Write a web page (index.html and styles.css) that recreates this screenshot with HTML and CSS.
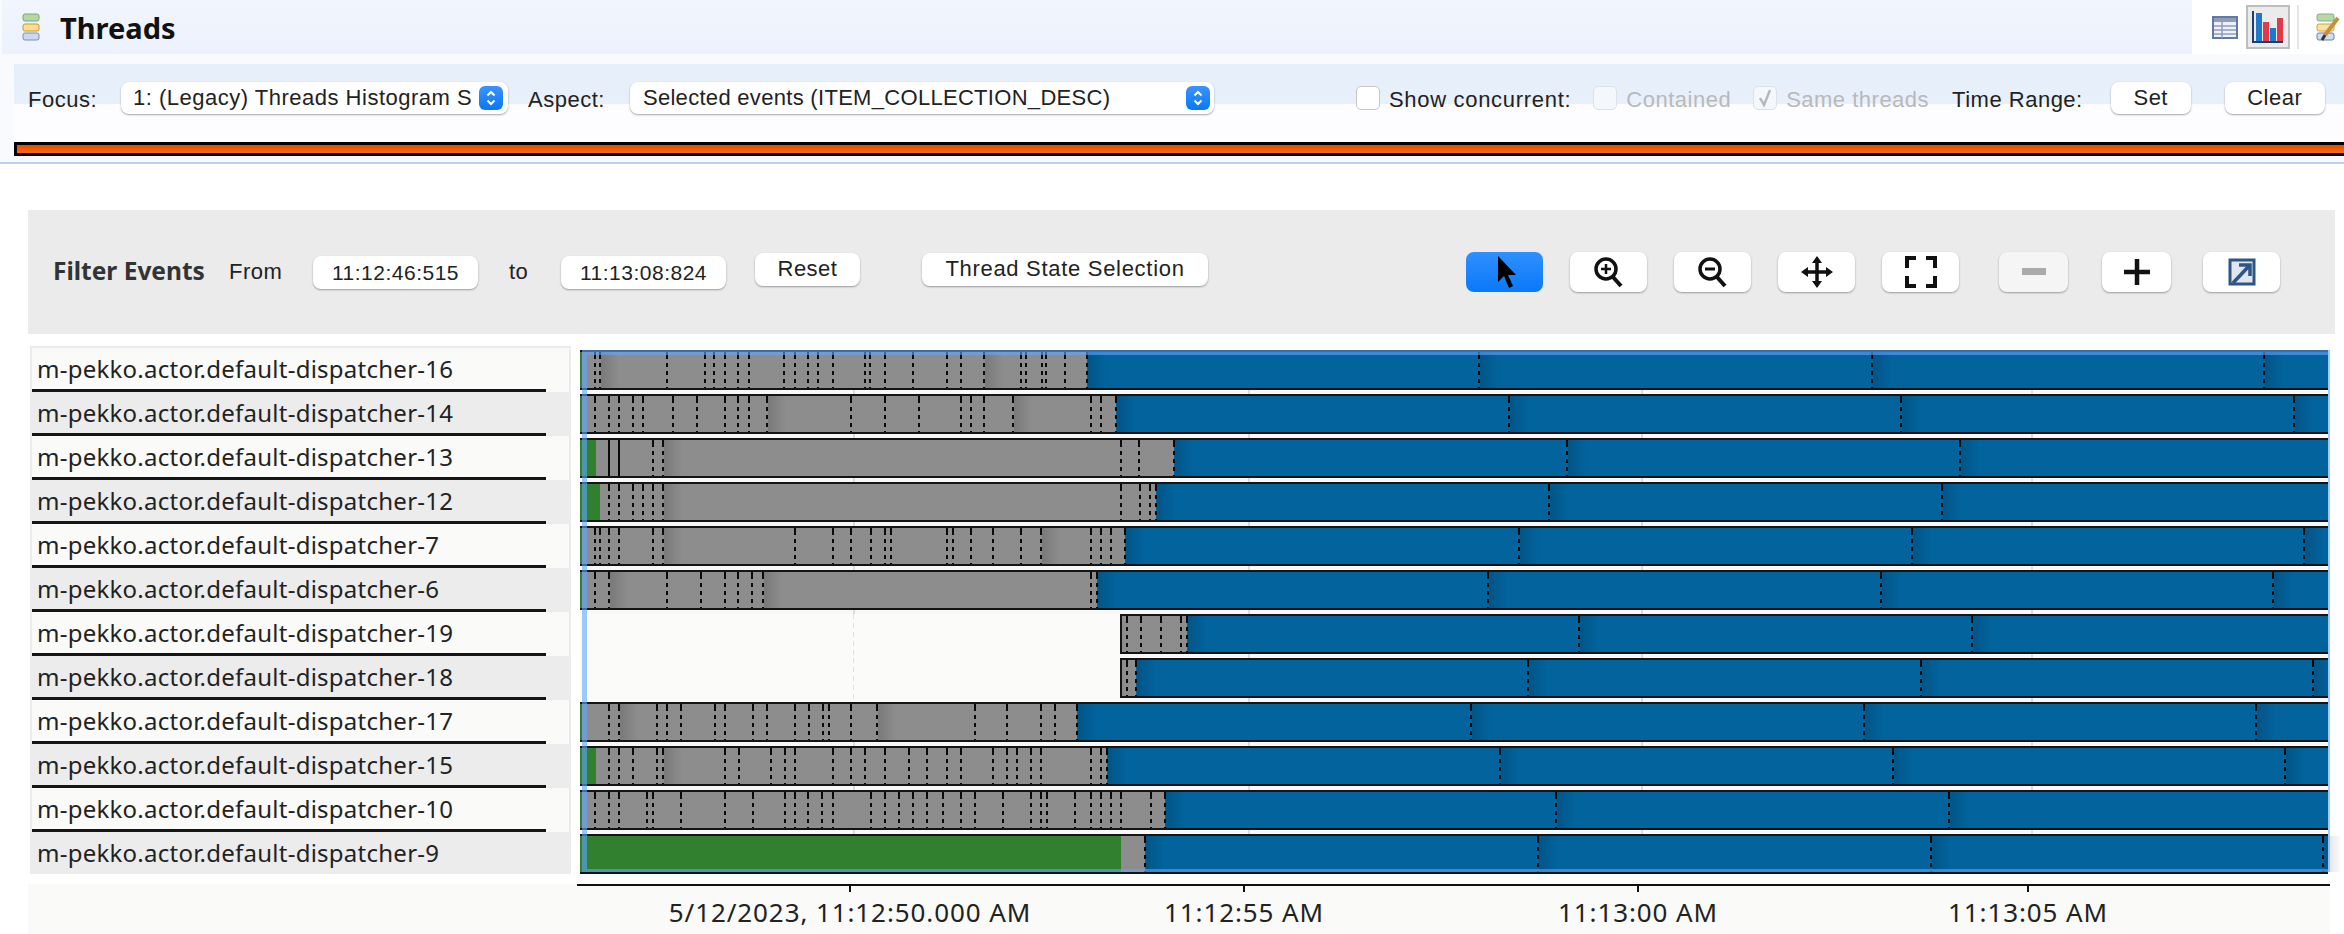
FILE: index.html
```html
<!DOCTYPE html>
<html>
<head>
<meta charset="utf-8"/>
<title>Threads</title>
<link rel="stylesheet" href="styles.css">
</head>
<body>

<div class="header">
  <div class="titlebar">
    <div class="title">
      <svg class="title-icon" width="18" height="28" viewBox="0 0 18 28">
        <rect x="1" y="1" width="16" height="7" rx="2" fill="#b5d8a2" stroke="#7ba67b"/>
        <rect x="1" y="11" width="16" height="7" rx="2" fill="#ffe08a" stroke="#c4963a"/>
        <rect x="1" y="20" width="16" height="7" rx="2" fill="#cdd8e9" stroke="#7194c6"/>
      </svg>
      <h1>Threads</h1>
    </div>
    <div class="view-tools">
      <svg class="tool-table" width="26" height="23" viewBox="0 0 26 23">
        <rect x="1" y="1" width="24" height="21" fill="#eef2f8" stroke="#64799f" stroke-width="2"/>
        <rect x="2" y="2" width="22" height="4" fill="#8d9dba"/>
        <path d="M2 10h22M2 14h22M2 18h22M10 6v16" stroke="#8d9dba" stroke-width="1.5" fill="none"/>
      </svg>
      <div class="tool-chart">
        <svg width="34" height="34" viewBox="0 0 34 34">
          <path d="M2 1v31h30" stroke="#1f3d6b" stroke-width="2" fill="none"/>
          <rect x="5" y="3" width="6" height="28" fill="#1f78c8"/>
          <rect x="12" y="12" width="6" height="19" fill="#e23a48"/>
          <rect x="19" y="18" width="6" height="13" fill="#1f78c8"/>
          <rect x="26" y="8" width="6" height="23" fill="#e23a48"/>
        </svg>
      </div>
      <div class="tool-sep"></div>
      <svg class="tool-edit" width="24" height="28" viewBox="0 0 24 28">
        <rect x="1" y="1" width="17" height="7" rx="2" fill="#b9d8a8" stroke="#86ad86"/>
        <rect x="1" y="11" width="17" height="7" rx="2" fill="#fbe39b" stroke="#c9a24e"/>
        <rect x="1" y="20" width="17" height="7" rx="2" fill="#d2dcec" stroke="#5f82b8"/>
        <path d="M22 5 9 22" stroke="#c78f3c" stroke-width="4"/>
        <path d="M9 22 6 27" stroke="#333" stroke-width="3"/>
      </svg>
    </div>
  </div>

  <div class="focus-panel">
    <div class="controls">
      <label class="lbl">Focus:</label>
      <div class="combo combo-focus"><span class="combo-text">1: (Legacy) Threads Histogram S</span><span class="stepper"><svg width="12" height="18" viewBox="0 0 12 18"><path d="M2.500 6.500 6 3l3.500 3.500M2.500 11.500 6 15l3.500-3.500" stroke="#fff" stroke-width="2" fill="none"/></svg></span></div>
      <label class="lbl lbl-aspect">Aspect:</label>
      <div class="combo combo-aspect"><span class="combo-text">Selected events (ITEM_COLLECTION_DESC)</span><span class="stepper"><svg width="12" height="18" viewBox="0 0 12 18"><path d="M2.500 6.500 6 3l3.500 3.500M2.500 11.500 6 15l3.500-3.500" stroke="#fff" stroke-width="2" fill="none"/></svg></span></div>
      <span class="check check-show"></span>
      <label class="lbl lbl-check lbl-show">Show concurrent:</label>
      <span class="check check-off check-contained"></span>
      <label class="lbl lbl-check lbl-off">Contained</label>
      <span class="check check-off check-same"><svg width="18" height="20" viewBox="0 0 18 20"><path d="M4 10l4 7 6-15" stroke="#b5b8bc" stroke-width="2.500" fill="none"/></svg></span>
      <label class="lbl lbl-check lbl-off">Same threads</label>
      <label class="lbl lbl-range">Time Range:</label>
      <button class="btn btn-set">Set</button>
      <button class="btn btn-clear">Clear</button>
    </div>
    <div class="range-bar"></div>
  </div>
</div>

<div class="filter">
  <strong class="filter-title">Filter Events</strong>
  <span class="filter-from">From</span>
  <div class="time-box">11:12:46:515</div>
  <span class="filter-to">to</span>
  <div class="time-box">11:13:08:824</div>
  <button class="btn btn-small btn-reset">Reset</button>
  <button class="btn btn-small btn-state">Thread State Selection</button>

  <button class="btn tool tool-active tool-first"><svg width="26" height="34" viewBox="0 0 26 34"><path d="M6 1v26l6-6 5 12 4-2-5-11h8z" fill="#000"/></svg></button>
  <button class="btn tool"><svg width="34" height="32" viewBox="0 0 34 32"><circle cx="14" cy="13" r="10" fill="none" stroke="#111" stroke-width="3.500"/><path d="M9 13h10M14 8v10" stroke="#111" stroke-width="2.500"/><path d="M21 21l8 9" stroke="#111" stroke-width="4"/></svg></button>
  <button class="btn tool"><svg width="34" height="32" viewBox="0 0 34 32"><circle cx="14" cy="13" r="10" fill="none" stroke="#111" stroke-width="3.500"/><path d="M9 13h10" stroke="#111" stroke-width="3"/><path d="M21 21l8 9" stroke="#111" stroke-width="4"/></svg></button>
  <button class="btn tool"><svg width="34" height="32" viewBox="0 0 34 32"><path d="M17 4v24M5 16h24" stroke="#111" stroke-width="3.500"/><path d="M17 0l-5 7h10zM17 32l-5-7h10zM1 16l7-5v10zM33 16l-7-5v10z" fill="#111"/></svg></button>
  <button class="btn tool"><svg width="34" height="32" viewBox="0 0 34 32"><path d="M12 2H3v10M22 2h9v10M12 30H3V20M22 30h9V20" fill="none" stroke="#111" stroke-width="4"/></svg></button>
  <button class="btn tool tool-narrow tool-off tool-minus"><svg width="24" height="8" viewBox="0 0 24 8"><rect width="24" height="7" fill="#aaa"/></svg></button>
  <button class="btn tool tool-narrow tool-plus"><svg width="26" height="26" viewBox="0 0 26 26"><path d="M13 0v26M0 13h26" stroke="#111" stroke-width="4.500"/></svg></button>
  <button class="btn tool tool-export"><svg width="28" height="28" viewBox="0 0 28 28"><rect x="2" y="2" width="24" height="24" fill="#dfe6f0" stroke="#2f5683" stroke-width="3"/><path d="M5 25 21 8M11 7h11v11" fill="none" stroke="#2f5683" stroke-width="3.500"/></svg></button>
</div>

<div class="threads">
  <div class="thread-list" id="names"></div>
  <div class="chart" id="chart">
    <div class="selection"></div>
  </div>
</div>

<div class="axis">
  <div class="ruler">
    <span class="tick" style="left:272px"><em>5/12/2023, 11:12:50.000 AM</em></span>
    <span class="tick" style="left:666px"><em>11:12:55 AM</em></span>
    <span class="tick" style="left:1060px"><em>11:13:00 AM</em></span>
    <span class="tick" style="left:1450px"><em>11:13:05 AM</em></span>
  </div>
</div>

<script src="chart.js"></script>
</body>
</html>
```

FILE: styles.css
```css
html, body {
   margin: 0;
   height: 934px;
   overflow: hidden;
   background-color: white;
}

body {
   font-family: "Liberation Sans", Arial, sans-serif;
   color: #222;
}

/* top part */

.header {
   height: 162px;
   border-bottom: 2px solid #b9d2f1;
   background-color: #f8fafe;
}

.titlebar {
   display: flex;
   height: 54px;
   margin-left: 2px;
}

.title {
   display: flex;
   align-items: center;
   width: 2190px;
   background: linear-gradient(#f1f5fc, #ecf2fc);
}

.title-icon {
   margin: 0 20px 0 20px;
}

h1 {
   margin: 0;
   font-family: "Noto Sans", sans-serif;
   font-size: 29px;
   font-weight: 700;
   color: #111;
}

.view-tools {
   display: flex;
   align-items: center;
   flex: 1;
   padding-left: 20px;
   background-color: white;
}

.tool-table {
   margin-right: 8px;
}

.tool-chart {
   display: flex;
   align-items: center;
   justify-content: center;
   width: 40px;
   height: 40px;
   border: 2px solid #bdbdbd;
   background-color: #ebebeb;
}

.tool-sep {
   width: 2px;
   height: 44px;
   margin: 0 17px 0 7px;
   background-color: #e6e6e6;
}

.focus-panel {
   margin: 10px 0 0 14px;
   background: linear-gradient(#e6eefa 0, #e8f0fb 40px, #fdfdff 40px);
}

.controls {
   display: flex;
   align-items: center;
   height: 78px;
   padding: 2px 0 12px 14px;
   box-sizing: border-box;
}

.lbl {
   font-size: 22px;
   padding-top: 4px;
   letter-spacing: 0.5px;
   white-space: nowrap;
}

.lbl-aspect {
   margin: 0 25px 0 20px;
}

.lbl-check {
   margin-left: 9px;
}

.lbl-show {
   letter-spacing: 0.7px;
}

.lbl-off {
   color: #b7b9bc;
}

.lbl-range {
   margin-left: 23px;
}

.combo {
   display: flex;
   align-items: center;
   flex: none;
   height: 32px;
   box-sizing: border-box;
   border-radius: 8px;
   background-color: white;
   box-shadow: 0 1px 2px rgba(0, 0, 0, 0.35);
   font-size: 22px;
   letter-spacing: 0.5px;
}

.combo-text {
   flex: 1;
   overflow: hidden;
   white-space: nowrap;
   margin-right: 6px;
}

.combo-focus {
   width: 387px;
   margin-left: 24px;
   padding: 0 5px 0 12px;
}

.combo-aspect {
   width: 584px;
   padding: 0 4px 0 13px;
   letter-spacing: 0.3px;
}

.stepper {
   display: flex;
   align-items: center;
   justify-content: center;
   flex: none;
   width: 24px;
   height: 24px;
   border-radius: 6px;
   background: linear-gradient(#3a93ff, #0a78f5);
}

.check {
   display: flex;
   align-items: center;
   justify-content: center;
   flex: none;
   width: 24px;
   height: 24px;
   box-sizing: border-box;
   border: 1px solid #c6c6c6;
   border-radius: 5px;
   background-color: white;
}

.check-show {
   margin-left: 142px;
}

.check-off {
   background-color: #f4f7fc;
   border-color: #dde1e6;
}

.check-contained {
   margin-left: 22px;
}

.check-same {
   margin-left: 22px;
}

.btn {
   border: none;
   border-radius: 8px;
   background-color: white;
   box-shadow: 0 1px 2px rgba(0, 0, 0, 0.35);
   font-family: inherit;
   font-size: 22px;
   letter-spacing: 0.5px;
   color: #222;
   padding: 0;
}

.btn-set {
   width: 80px;
   height: 32px;
   margin-left: 28px;
}

.btn-clear {
   width: 100px;
   height: 32px;
   margin-left: 34px;
}

.range-bar {
   height: 14px;
   box-sizing: border-box;
   border: 3px solid #000;
   border-right: none;
   background: linear-gradient(#e24a0c, #f96c06);
}

/* filter bar */

.filter {
   display: flex;
   align-items: center;
   width: 2307px;
   height: 124px;
   margin: 46px 0 0 28px;
   padding-left: 25px;
   box-sizing: border-box;
   background-color: #ebebeb;
}

.filter-title {
   flex: none;
   width: 152px;
   padding-bottom: 3px;
   white-space: nowrap;
   font-family: "Noto Sans", sans-serif;
   font-size: 24.5px;
   color: #333;
}

.filter-from {
   flex: none;
   width: 53px;
   margin: 0 31px 0 24px;
   font-size: 22px;
   letter-spacing: 0.5px;
}

.filter-to {
   flex: none;
   width: 20px;
   margin: 0 32px 0 31px;
   font-size: 22px;
   letter-spacing: 0.5px;
}

.time-box {
   flex: none;
   width: 165px;
   height: 33px;
   line-height: 33px;
   border-radius: 8px;
   text-align: center;
   background-color: white;
   box-shadow: 0 1px 2px rgba(0, 0, 0, 0.35);
   font-size: 21px;
   letter-spacing: 0.5px;
}

.btn-small {
   flex: none;
   height: 33px;
   margin-bottom: 6px;
}

.btn-reset {
   width: 105px;
   margin-left: 29px;
}

.btn-state {
   width: 286px;
   margin-left: 62px;
   letter-spacing: 0.7px;
}

.tool {
   display: flex;
   align-items: center;
   justify-content: center;
   flex: none;
   width: 77px;
   height: 40px;
   margin-left: 27px;
}

.tool-first {
   margin-left: 258px;
}

.tool-active {
   background: linear-gradient(#2f90ff, #0a78f8);
   box-shadow: none;
}

.tool-narrow {
   width: 69px;
}

.tool-off {
   background-color: #f5f5f5;
}

.tool-minus {
   margin-left: 40px;
}

.tool-plus {
   margin-left: 34px;
}

.tool-export {
   margin-left: 32px;
}

/* thread rows */

.threads {
   display: flex;
   margin: 12px 0 0 30px;
}

.thread-list {
   width: 541px;
   height: 528px;
   padding: 2px;
   box-sizing: border-box;
   background-color: #ebebeb;
}

.thread-name {
   height: 44px;
   box-sizing: border-box;
   padding: 0 0 3px 5px;
   line-height: 41px;
   font-family: "Noto Sans", sans-serif;
   font-size: 24px;
   letter-spacing: 0.25px;
   color: #222;
   background-color: #fafaf8;
   position: relative;
   white-space: nowrap;
}

.thread-name:nth-child(even) {
   background-color: #ececec;
}

.thread-name::after {
   content: "";
   position: absolute;
   left: 0;
   bottom: 0;
   width: 514px;
   height: 3px;
   background-color: #151515;
}

.thread-name:last-child {
   height: 40px;
}

.thread-name:last-child::after {
   display: none;
}

.chart {
   position: relative;
   width: 1748px;
   height: 522px;
   margin: 4px 0 0 9px;
   background-color: #f8f8f8;
}

.grid-line {
   position: absolute;
   top: 0;
   bottom: 0;
   width: 2px;
   background-color: #dcdcdc;
}

.row {
   position: relative;
   display: flex;
   height: 40px;
   margin-bottom: 4px;
}

.row:last-child {
   margin-bottom: 0;
}

/* empty time before a thread starts, runs over the gap to the next row */
.row-gap {
   flex: none;
   position: relative;
   height: 44px;
   background: repeating-linear-gradient(#e0e0e0 0 5px, transparent 5px 9px) no-repeat 273px 0 / 1px 100%, #fbfbf9;
}

.bar {
   position: relative;
   display: flex;
   flex: 1;
   box-sizing: border-box;
   border-top: 2px solid #141414;
   border-bottom: 2px solid #141414;
}

.bar-boxed {
   border-left: 2px solid #141414;
}

.seg {
   flex: none;
   height: 100%;
}

.seg-run {
   background-color: #318030;
}

.seg-park {
   background-color: #8d8d8e;
}

.seg-wait {
   flex: 1;
   background-color: #02639d;
}

.mark {
   position: absolute;
   top: 0;
   bottom: 0;
   width: 2px;
   background: repeating-linear-gradient(#0a0a0a 0 4px, transparent 4px 8px);
   background-position-y: 3px;
}

.mark-solid {
   background: #0a0a0a;
}

.shade::after {
   content: "";
   position: absolute;
   top: 0;
   bottom: 0;
   left: 2px;
   width: 18px;
   background: linear-gradient(to right, rgba(0, 0, 0, 0.14), rgba(0, 0, 0, 0));
}

.selection {
   position: absolute;
   z-index: 2;
   top: 0;
   left: 2px;
   right: -2px;
   bottom: 0;
   border-style: solid;
   border-width: 5px 2px 3px 5px;
   border-color: rgba(96, 165, 255, 0.6);
}

/* time axis */

.axis {
   width: 2302px;
   height: 60px;
   margin: 10px 0 0 28px;
   padding-left: 549px;
   box-sizing: border-box;
   background-color: #fafaf8;
}

.ruler {
   position: relative;
   height: 2px;
   background-color: #111;
}

.tick {
   position: absolute;
   top: 2px;
   width: 2px;
   height: 6px;
   background-color: #111;
}

.tick em {
   position: absolute;
   top: 8px;
   left: 1px;
   transform: translateX(-50%);
   font-family: "Noto Sans", sans-serif;
   font-size: 26px;
   font-style: normal;
   letter-spacing: 0.9px;
   white-space: nowrap;
   color: #222;
}
```

FILE: chart.js
```js
// x values are page pixels read off the timeline, the chart starts at 580
var ORIGIN = 580;
var WIDTH = 1748;
var PERIOD = 392.5;

// first: first mark inside the blue part, they repeat every PERIOD
var threads = [
  { name: "m-pekko.actor.default-dispatcher-16", run: 582, end: 1087, first: 1479,
    marks: [595,600,667,705,714,725,738,749,784,795,808,818,833,865,870,885,913,947,961,984,1021,1026,1042,1046,1065],
    shade: [600,984] },
  { name: "m-pekko.actor.default-dispatcher-14", run: 582, end: 1116, first: 1508.5,
    marks: [595,609,619,633,643,673,697,725,738,749,767,851,885,919,961,971,984,1013,1091,1101],
    shade: [767,1013] },
  { name: "m-pekko.actor.default-dispatcher-13", run: 596, end: 1174, first: 1567,
    marks: [653,663,1121,1139], solid: [609,619], shade: [663] },
  { name: "m-pekko.actor.default-dispatcher-12", run: 600, end: 1156, first: 1549,
    marks: [609,619,633,643,653,663,1121,1140,1150], shade: [663] },
  { name: "m-pekko.actor.default-dispatcher-7", run: 582, end: 1125, first: 1519,
    marks: [595,600,609,619,653,663,795,833,851,871,885,891,947,953,971,993,1021,1041,1091,1101,1111],
    shade: [663,1041] },
  { name: "m-pekko.actor.default-dispatcher-6", run: 582, end: 1097, first: 1488,
    marks: [595,609,667,701,725,738,752,763,1091], shade: [609,763] },
  { name: "m-pekko.actor.default-dispatcher-19", start: 1120, end: 1185, first: 1577,
    marks: [1125,1139,1159,1179] },
  { name: "m-pekko.actor.default-dispatcher-18", start: 1120, end: 1134, first: 1526,
    marks: [1125] },
  { name: "m-pekko.actor.default-dispatcher-17", run: 582, end: 1077, first: 1471,
    marks: [609,619,657,667,681,715,725,753,767,795,809,823,829,851,877,975,1007,1041,1055],
    shade: [619,877] },
  { name: "m-pekko.actor.default-dispatcher-15", run: 596, end: 1107, first: 1500,
    marks: [609,619,633,657,663,725,739,771,785,795,833,851,865,885,909,927,947,961,993,1007,1017,1031,1041,1091,1101],
    shade: [663] },
  { name: "m-pekko.actor.default-dispatcher-10", run: 582, end: 1165, first: 1556,
    marks: [595,609,619,647,653,681,725,753,785,795,808,822,833,871,885,899,913,927,943,961,975,1003,1031,1041,1047,1075,1091,1101,1111,1121,1151] },
  { name: "m-pekko.actor.default-dispatcher-9", run: 1121, end: 1145, first: 1538,
    marks: [] }
];

var names = document.getElementById("names");
var chart = document.getElementById("chart");

function el(cls, parent) {
  var d = document.createElement("div");
  d.className = cls;
  parent.appendChild(d);
  return d;
}

function addMark(bar, x, barLeft, cls) {
  var m = el("mark " + cls, bar);
  m.style.left = Math.round(x - barLeft - 1) + "px";
}

[853, 1248, 1641, 2031].forEach(function (x) {
  el("grid-line", chart).style.left = (x - ORIGIN) + "px";
});

threads.forEach(function (t) {
  el("thread-name", names).textContent = t.name;

  var row = el("row", chart);
  var barLeft = t.start || ORIGIN;
  if (t.start) {
    el("row-gap", row).style.width = (t.start - ORIGIN) + "px";
  }
  var bar = el(t.start ? "bar bar-boxed" : "bar", row);

  // blue tail fills what is left of the row
  if (t.run) {
    el("seg seg-run", bar).style.width = (t.run - barLeft) + "px";
  }
  el("seg seg-park", bar).style.width = (t.end - (t.run || barLeft)) + "px";
  el("seg seg-wait", bar);

  (t.marks || []).forEach(function (x) {
    var shaded = t.shade && t.shade.indexOf(x) >= 0;
    addMark(bar, x, barLeft, shaded ? "shade" : "");
  });
  (t.solid || []).forEach(function (x) {
    addMark(bar, x, barLeft, "mark-solid");
  });
  addMark(bar, t.end, barLeft, "shade");
  for (var x = t.first; x < ORIGIN + WIDTH; x += PERIOD) {
    addMark(bar, x, barLeft, "shade");
  }
});

// keep the selection frame on top of the rows
chart.appendChild(chart.querySelector(".selection"));
```
